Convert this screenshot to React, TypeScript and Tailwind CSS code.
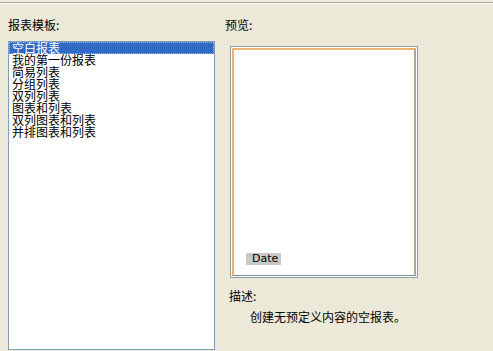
import React from "react";

const items = [
  "空白报表",
  "我的第一份报表",
  "简易列表",
  "分组列表",
  "双列列表",
  "图表和列表",
  "双列图表和列表",
  "并排图表和列表",
];

export default function App() {
  const font = { fontFamily: '"Noto Sans CJK SC", "Noto Sans", sans-serif' };
  return (
    <div
      className="w-[493px] h-[351px] bg-[#ECE9D8] overflow-hidden text-[12px] text-black"
      style={font}
    >
      <div className="mt-[2px] h-px bg-[#aca899]" />
      <div className="h-px bg-white" />
      <div className="flex pl-[8px] pt-[14px]">
        <div className="w-[207px] flex flex-col">
          <div className="h-[14px] leading-[14px]">报表模板:</div>
          <div className="mt-[9px] h-[309px] border border-[#7F9DB9] bg-white">
            {items.map((t, i) => (
              <div
                key={t}
                className={
                  "h-[12px] leading-[12px] pl-[3px] whitespace-nowrap " +
                  (i === 0
                    ? "bg-[#316AC5] text-white outline-1 outline-dotted outline-[#ffffff80] -outline-offset-1"
                    : "")
                }
              >
                {t}
              </div>
            ))}
          </div>
        </div>
        <div className="ml-[10px] flex flex-col">
          <div className="h-[14px] leading-[14px]">预览:</div>
          <div className="mt-[14px] ml-[5px] w-[188px] h-[232px] border border-[#8e9ca4] p-px bg-white">
            <div className="w-full h-full border-t-2 border-l-2 border-r-2 border-b border-t-[#eeb274] border-l-[#eeb274] border-r-[#b8a48c] border-b-[#7f8f98] bg-white flex flex-col justify-end pl-[12px] pb-[10px]">
              <div
                className="w-[35px] h-[12px] bg-[#c8c8c8] text-[11px] leading-[12px] pl-[6px]"
                style={{ fontFamily: '"DejaVu Sans", sans-serif' }}
              >
                Date
              </div>
            </div>
          </div>
          <div className="mt-[11px] ml-[4px] h-[14px] leading-[14px]">描述:</div>
          <div className="mt-[7px] ml-[25px] h-[14px] leading-[14px] whitespace-nowrap">
            创建无预定义内容的空报表。
          </div>
        </div>
      </div>
    </div>
  );
}
